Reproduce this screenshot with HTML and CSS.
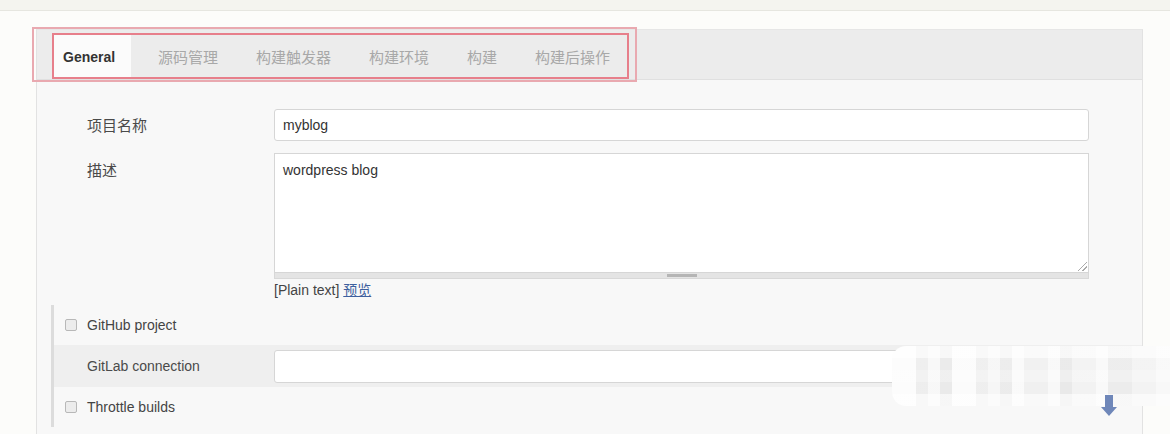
FILE: index.html
```html
<!DOCTYPE html>
<html lang="zh-CN">

<head>
    <meta charset="UTF-8">
    <title>myblog 配置</title>
    <link rel="stylesheet" href="styles.css">
</head>

<body>
    <div class="topbar"></div>

    <div class="main">
        <div class="panel">
            <div class="tabbar">
                <ul class="tabs">
                    <li class="tab active">General</li>
                    <li class="tab">源码管理</li>
                    <li class="tab">构建触发器</li>
                    <li class="tab">构建环境</li>
                    <li class="tab">构建</li>
                    <li class="tab">构建后操作</li>
                </ul>
                <!-- 标注框 -->
                <div class="mark-outer"></div>
                <div class="mark-inner"></div>
            </div>

            <div class="panel-body">
                <div class="row">
                    <div class="label">项目名称</div>
                    <div class="field">
                        <div class="input">myblog</div>
                    </div>
                </div>
                <div class="row row-top">
                    <div class="label">描述</div>
                    <div class="field">
                        <div class="textarea">wordpress blog<span class="grip"></span></div>
                        <div class="resize-bar"><span class="handle"></span></div>
                        <div class="preview">[Plain text] <a href="#">预览</a></div>
                    </div>
                </div>

                <div class="section">
                    <div class="check-row">
                        <span class="checkbox"></span>
                        <span>GitHub project</span>
                    </div>
                    <div class="sub-row">
                        <div class="label">GitLab connection</div>
                        <div class="field">
                            <div class="input empty"></div>
                        </div>
                    </div>
                    <div class="check-row">
                        <span class="checkbox"></span>
                        <span>Throttle builds</span>
                    </div>
                </div>
            </div>
        </div>
    </div>

    <div class="mosaic"></div>
    <svg class="arrow" width="18" height="22" viewBox="0 0 18 22">
        <path d="M5 0 H13 V12 H17 L9 21 L1 12 H5 Z" fill="#6f87b9" />
    </svg>
</body>

</html>
```

FILE: styles.css
```css
* {
    margin: 0;
    padding: 0;
    box-sizing: border-box;
}

li {
    list-style: none;
}

body {
    background-color: #fcfcfa;
    font-family: "Liberation Sans", Arial, "Noto Sans CJK SC", sans-serif;
    font-size: 14px;
    color: #333;
    height: 434px;
    overflow: hidden;
    position: relative;
}

.topbar {
    height: 11px;
    background-color: #f4f4ef;
    border-bottom: 1px solid #e6e6e0;
}

.main {
    padding: 18px 0 0 36px;
    width: 1143px;
}

.panel {
    border-left: 1px solid #e2e2e2;
    border-right: 1px solid #e2e2e2;
    border-top: 1px solid #e6e6e6;
    background-color: #f8f8f8;
    height: 420px;
}

.tabbar {
    position: relative;
    height: 50px;
    background-color: #ececec;
    border-bottom: 1px solid #e0e0e0;
    padding: 5px 0 0 16px;
}

.tabs {
    display: flex;
    height: 44px;
}

.tab {
    padding: 0 19px;
    line-height: 44px;
    font-family: "Noto Sans CJK SC", sans-serif;
    font-size: 15px;
    color: #a8a8a8;
}

.tab.active {
    width: 78px;
    background-color: #fbfbfb;
    padding: 0 0 0 10px;
    margin-right: 8px;
    font-family: "Liberation Sans", Arial, sans-serif;
    font-size: 14px;
    font-weight: bold;
    color: #333;
}

.mark-outer {
    position: absolute;
    left: -5px;
    top: -3px;
    width: 605px;
    height: 55px;
    border: 2px solid #e9a9b0;
}

.mark-inner {
    position: absolute;
    left: 15px;
    top: 3px;
    width: 577px;
    height: 46px;
    border: 2px solid #e77f8b;
}

.panel-body {
    padding-top: 29px;
}

.row {
    display: grid;
    grid-template-columns: 187px 1fr;
    align-items: center;
    padding: 0 53px 0 50px;
}

.row-top {
    align-items: start;
    margin-top: 12px;
}

.label {
    font-family: "Noto Sans CJK SC", sans-serif;
    font-size: 15px;
    line-height: 20px;
    color: #4a4a4a;
}

.row-top .label {
    padding-top: 7px;
}

.input {
    height: 32px;
    background-color: #fff;
    border: 1px solid #d6d6d6;
    border-radius: 3px;
    padding: 0 8px;
    line-height: 30px;
    font-size: 14px;
    color: #333;
}

.textarea {
    position: relative;
    height: 120px;
    background-color: #fff;
    border: 1px solid #d6d6d6;
    padding: 8px 8px;
    font-size: 14px;
    color: #333;
}

.grip {
    position: absolute;
    right: 1px;
    bottom: 1px;
    width: 9px;
    height: 9px;
    background: linear-gradient(135deg, transparent 45%, #aaa 45%, #aaa 55%, transparent 55%, transparent 72%, #aaa 72%, #aaa 82%, transparent 82%);
}

.resize-bar {
    height: 6px;
    background-color: #e4e4e4;
    border: 1px solid #d8d8d8;
    border-top: none;
    display: flex;
    justify-content: center;
    align-items: center;
}

.handle {
    width: 30px;
    height: 3px;
    background-color: #b5b5b5;
}

.preview {
    line-height: 20px;
    font-size: 14px;
    color: #444;
}

.preview a {
    color: #3d5f9e;
    font-family: "Noto Sans CJK SC", sans-serif;
}

.section {
    margin: 5px 0 0 14px;
    border-left: 3px solid #dcdcdc;
}

.check-row {
    display: flex;
    align-items: center;
    height: 40px;
    padding-left: 11px;
    gap: 10px;
    font-size: 14px;
    color: #444;
}

.check-row:last-child {
    height: 40px;
}

.checkbox {
    width: 12px;
    height: 12px;
    border: 1px solid #b8b8b8;
    border-radius: 2px;
    background-color: #ececec;
}

.sub-row {
    display: grid;
    grid-template-columns: 187px 1fr;
    align-items: center;
    height: 42px;
    padding: 0 53px 0 33px;
    background-color: #efefef;
}

.sub-row .label {
    font-family: "Liberation Sans", Arial, sans-serif;
    font-size: 14px;
}

.input.empty {
    height: 33px;
}

/* 水印马赛克 */
.mosaic {
    position: absolute;
    left: 892px;
    top: 346px;
    width: 278px;
    height: 60px;
    border-radius: 14px 0 0 14px;
    background-color: #f6f6f6;
    background-image:
        linear-gradient(180deg, rgba(255, 255, 255, 0.75) 0 12px, rgba(255, 255, 255, 0.3) 12px 24px, rgba(255, 255, 255, 0.45) 24px 36px, rgba(255, 255, 255, 0.25) 36px 48px, rgba(255, 255, 255, 0.7) 48px 60px),
        linear-gradient(90deg, #fbfbfb 0 24px, #e8e8e8 24px 36px, #f5f5f5 36px 48px, #e3e3e3 48px 60px, #fafafa 60px 84px, #e9e9e9 84px 96px, #f3f3f3 96px 108px, #e5e5e5 108px 120px, #f8f8f8 120px 132px, #ebebeb 132px 156px, #f6f6f6 156px 168px, #e2e2e2 168px 180px, #eeeeee 180px 204px, #f7f7f7 204px 216px, #e6e6e6 216px 240px, #efefef 240px 264px, #f6f6f6 264px 278px);
}

.arrow {
    position: absolute;
    left: 1100px;
    top: 395px;
}
```
